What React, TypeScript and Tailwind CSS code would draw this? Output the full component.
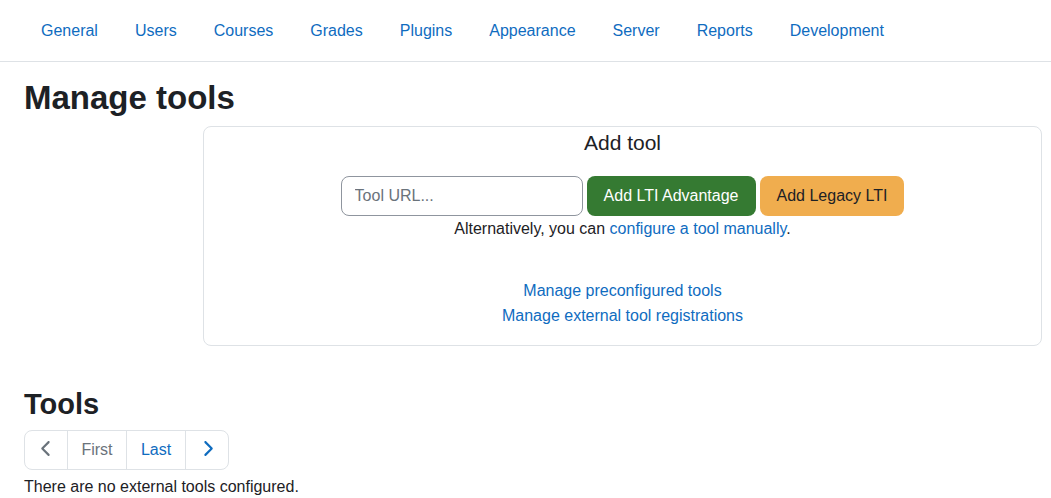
import React from 'react';
import { FaChevronLeft, FaChevronRight } from 'react-icons/fa6';

interface NavItem {
  label: string;
  href: string;
}

const navItems: NavItem[] = [
  { label: 'General', href: '#general' },
  { label: 'Users', href: '#users' },
  { label: 'Courses', href: '#courses' },
  { label: 'Grades', href: '#grades' },
  { label: 'Plugins', href: '#plugins' },
  { label: 'Appearance', href: '#appearance' },
  { label: 'Server', href: '#server' },
  { label: 'Reports', href: '#reports' },
  { label: 'Development', href: '#development' },
];

const AdminNav: React.FC = () => (
  <nav className="border-b border-[#dee2e6] px-6">
    <ul className="flex gap-[37px] px-[17px]">
      {navItems.map((item) => (
        <li key={item.label}>
          <a href={item.href} className="block py-[18px] text-[#0f6cbf]">
            {item.label}
          </a>
        </li>
      ))}
    </ul>
  </nav>
);

const AddToolCard: React.FC = () => (
  <section className="mr-[9px] ml-[203px] rounded-lg border border-[#dee2e6] pb-[17px] text-center">
    <h2 className="pt-1 text-[21px] leading-6">Add tool</h2>

    <form className="mt-[21px] flex justify-center gap-1" onSubmit={(e) => e.preventDefault()}>
      <input
        type="text"
        aria-label="Tool URL"
        placeholder="Tool URL..."
        className="h-10 w-[242px] rounded-lg border border-[#8f959e] bg-white px-[13px] placeholder:text-[#6a737b]"
      />
      <button type="submit" className="h-10 rounded-lg bg-[#357a32] px-[17px] pb-px text-white">
        Add LTI Advantage
      </button>
      <button type="button" className="h-10 rounded-lg bg-[#f0ad4e] px-[17px] pb-px text-[#1d2125]">
        Add Legacy LTI
      </button>
    </form>

    <p>
      Alternatively, you can{' '}
      <a href="#manual" className="text-[#0f6cbf]">configure a tool manually</a>.
    </p>

    <div className="mt-[37px] flex flex-col items-center text-[#0f6cbf]">
      <a href="#preconfigured">Manage preconfigured tools</a>
      <a href="#registrations">Manage external tool registrations</a>
    </div>
  </section>
);

const Pagination: React.FC = () => (
  <nav aria-label="Tools pages" className="mt-2 flex">
    <div className="flex h-10 divide-x divide-[#dee2e6] rounded-lg border border-[#dee2e6]">
      <button type="button" disabled aria-label="Previous" className="flex w-[43px] items-center justify-center pb-[3px] text-[#6a737b]">
        <FaChevronLeft size={17} aria-hidden="true" />
      </button>
      <button type="button" disabled className="w-[59px] pb-px text-[#6a737b]">First</button>
      <button type="button" className="w-[59px] pb-px text-[#0f6cbf]">Last</button>
      <button type="button" aria-label="Next" className="flex w-[42px] items-center justify-center pb-[3px] text-[#0f6cbf]">
        <FaChevronRight size={17} aria-hidden="true" />
      </button>
    </div>
  </nav>
);

export default function App() {
  return (
    <div className="min-h-screen bg-white font-['Liberation_Sans',Arial,sans-serif] text-base leading-[25px] text-[#1d2125]">
      <AdminNav />
      <main>
        <h1 className="px-6 pt-4 pb-2 text-[33px] leading-10 font-bold">Manage tools</h1>
        <AddToolCard />
        <section className="px-6 pt-10">
          <h2 className="text-[29px] leading-9 font-bold">Tools</h2>
          <Pagination />
          <p className="mt-1">There are no external tools configured.</p>
        </section>
      </main>
    </div>
  );
}
